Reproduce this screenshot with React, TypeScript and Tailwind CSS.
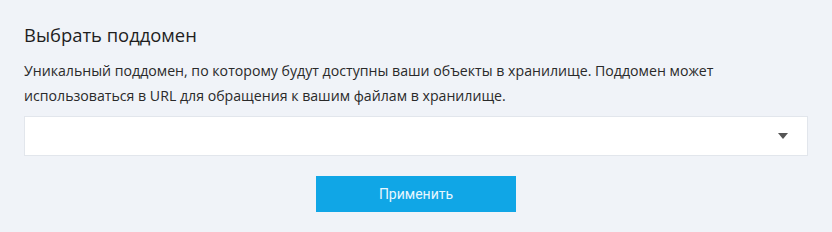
export default function App() {
  return (
    <div className="w-[832px] h-[232px] bg-[#f0f3f8] px-6 pt-[22px] text-[#222] font-['Open_Sans',sans-serif]">
      <h2 className="text-[18.4px] leading-[25px] text-[#1e1e1e]">Выбрать поддомен</h2>
      <p className="mt-[11px] text-[14.15px] leading-[25px] text-[#2a2a2a] max-w-[770px]">
        Уникальный поддомен, по которому будут доступны ваши объекты в хранилище. Поддомен может использоваться в URL для обращения к вашим файлам в хранилище.
      </p>
      <div className="mt-[8px] h-10 bg-white border border-[#e2e6ec] flex items-center justify-end pr-[19px]">
        <svg width="10" height="6" viewBox="0 0 10 6">
          <path d="M0 0h10L5 6z" fill="#555" />
        </svg>
      </div>
      <div className="flex justify-center mt-5">
        <button className="w-[200px] h-9 bg-[#10a6e6] text-[#e8f7fe] text-[14px] font-['Liberation_Sans_Narrow','Roboto',sans-serif]">
          Применить
        </button>
      </div>
    </div>
  );
}
